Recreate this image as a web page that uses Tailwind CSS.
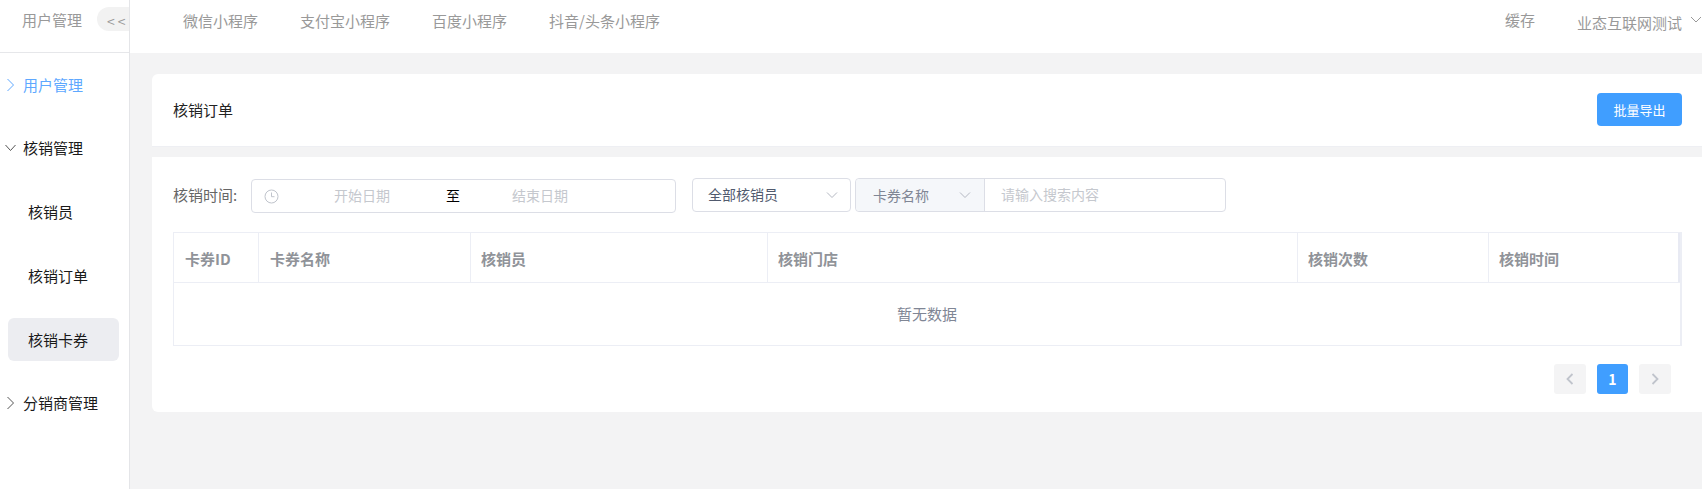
<!DOCTYPE html>
<html lang="zh-CN">
<head>
<meta charset="utf-8">
<script src="https://cdn.jsdelivr.net/npm/@tailwindcss/browser@4"></script>
</head>
<body class="bg-[#f3f3f4]">
<div class="flex h-[489px] w-[1702px] overflow-hidden bg-[#f3f3f4] font-['Noto_Sans_CJK_SC','Noto_Sans',sans-serif] text-[15px] leading-[20px]">
  <!-- sidebar -->
  <aside class="w-[130px] shrink-0 border-r border-[#e4e5e8] bg-white">
    <div class="flex h-[53px] items-start border-b border-[#e6e7ea] pl-[22px] pt-[7px]">
      <span class="w-[75px] shrink-0 pt-[3px] text-[#999]">用户管理</span>
      <span class="flex h-[24px] w-[32px] shrink-0 items-center rounded-l-[12px] bg-[#f2f2f2] pl-[10px] pt-[3px] text-[14px] tracking-[3px] text-[#999]">&lt;&lt;</span>
    </div>
    <nav class="flex flex-col pt-[10px] text-[#1a1a1a]">
      <div class="flex h-[43px] items-center pl-[4px] text-[#5ea8ff]">
        <svg class="mr-[6px] h-[14px] w-[13px]" viewBox="0 0 13 14" fill="none" stroke="currentColor" stroke-width="1"><path d="M3.5 1 L9.5 7 L3.5 13"/></svg>
        <span>用户管理</span>
      </div>
      <div class="mt-[20px] flex h-[43px] items-center pl-[4px]">
        <svg class="mr-[3px] h-[10px] w-[16px]" viewBox="0 0 16 10" fill="none" stroke="#555" stroke-width="1"><path d="M1.5 2 L6.5 7.5 L11.5 2"/></svg>
        <span>核销管理</span>
      </div>
      <div class="mt-[21px] flex h-[43px] items-center pl-[28px]">核销员</div>
      <div class="mt-[21px] flex h-[43px] items-center pl-[28px]">核销订单</div>
      <div class="mx-[8px] mt-[21px] flex h-[43px] w-[111px] items-center rounded-[6px] bg-[#ecedf1] pl-[20px]">核销卡券</div>
      <div class="mt-[20px] flex h-[43px] items-center pl-[4px]">
        <svg class="mr-[6px] h-[14px] w-[13px]" viewBox="0 0 13 14" fill="none" stroke="#555" stroke-width="1"><path d="M3.5 1 L9.5 7 L3.5 13"/></svg>
        <span>分销商管理</span>
      </div>
    </nav>
  </aside>
  <!-- main -->
  <div class="flex min-w-0 flex-1 flex-col">
    <header class="flex h-[53px] shrink-0 items-start bg-white pl-[53px] pt-[11px] text-[#999]">
      <span>微信小程序</span>
      <span class="ml-[42px]">支付宝小程序</span>
      <span class="ml-[42px]">百度小程序</span>
      <span class="ml-[42px]">抖音/头条小程序</span>
      <span class="ml-auto -mt-px">缓存</span>
      <span class="ml-[42px] mt-[2px]">业态互联网测试</span>
      <svg class="ml-[8px] mt-[4px] h-[9px] w-[12px]" viewBox="0 0 12 9" fill="none" stroke="#999" stroke-width="1"><path d="M1 2 L6 7 L11 2"/></svg>
    </header>
    <main class="flex flex-1 flex-col pl-[22px] pt-[21px]">
      <section class="flex h-[73px] items-center justify-between rounded-tl-[6px] border-b border-[#eeeff3] bg-white pl-[21px] pr-[20px] text-[#222]">
        <span>核销订单</span>
        <button class="mb-px h-[33px] w-[85px] rounded-[4px] bg-[#409eff] text-[13px] text-white">批量导出</button>
      </section>
      <section class="mt-[10px] h-[255px] rounded-bl-[6px] bg-white pl-[21px] pr-[20px] pt-[21px]">
        <div class="flex items-start">
          <span class="mt-[7px] w-[78px] text-[#666]">核销时间:</span>
          <div class="mt-px flex h-[34px] w-[425px] items-center rounded-[4px] border border-[#dcdee6] pl-[12px] text-[14px] text-[#c5c8ce]">
            <svg class="h-[15px] w-[15px]" viewBox="0 0 15 15" fill="none" stroke="#c0c4cc" stroke-width="1"><circle cx="7.5" cy="7.5" r="6.5"/><path d="M7.5 3.5 V7.7 H10.5"/></svg>
            <span class="mb-[2px] ml-[55px] w-[56px]">开始日期</span>
            <span class="mb-[2px] ml-[56px] w-[14px] text-black">至</span>
            <span class="mb-[2px] ml-[52px]">结束日期</span>
          </div>
          <div class="ml-[16px] flex h-[34px] w-[159px] items-center justify-between rounded-[4px] border border-[#dcdee6] pl-[15px] pr-[12px] text-[14px] text-[#515a6e]">
            <span class="mb-[2px]">全部核销员</span>
            <svg class="h-[8px] w-[12px]" viewBox="0 0 12 8" fill="none" stroke="#b4b8c2" stroke-width="1"><path d="M1 1.5 L6 6.5 L11 1.5"/></svg>
          </div>
          <div class="ml-[4px] flex h-[34px] w-[371px] items-center rounded-[4px] border border-[#dcdee6] text-[14px]">
            <div class="flex h-full w-[129px] items-center justify-between rounded-l-[4px] border-r border-[#dcdee6] bg-[#f5f7fa] pl-[17px] pr-[13px] text-[#808695]">
              <span>卡券名称</span>
              <svg class="h-[8px] w-[12px]" viewBox="0 0 12 8" fill="none" stroke="#b4b8c2" stroke-width="1"><path d="M1 1.5 L6 6.5 L11 1.5"/></svg>
            </div>
            <span class="mb-[2px] ml-[16px] text-[#c5c8ce]">请输入搜索内容</span>
          </div>
        </div>
        <div class="mt-[19px] h-[114px] border-t border-r-2 border-b border-l border-[#eceef5]">
          <div class="flex h-[50px] border-b border-[#eceef5] font-bold text-[#909399]">
            <div class="flex w-[85px] items-center border-r border-[#eceef5] pl-[11px] pt-[2px]">卡券ID</div>
            <div class="flex w-[212px] items-center border-r border-[#eceef5] pl-[11px] pt-[2px]">卡券名称</div>
            <div class="flex w-[297px] items-center border-r border-[#eceef5] pl-[10px] pt-[2px]">核销员</div>
            <div class="flex w-[530px] items-center border-r border-[#eceef5] pl-[10px] pt-[2px]">核销门店</div>
            <div class="flex w-[191px] items-center border-r border-[#eceef5] pl-[10px] pt-[2px]">核销次数</div>
            <div class="flex w-[191px] items-center border-r-[2px] border-[#e8eaf3] pl-[10px] pt-[2px]">核销时间</div>
          </div>
          <div class="flex h-[62px] items-center justify-center text-[#808695]">暂无数据</div>
        </div>
        <div class="mt-[18px] flex justify-end gap-[11px] pr-[11px]">
          <span class="flex h-[30px] w-[32px] items-center justify-center rounded-[3px] bg-[#f4f4f5]">
            <svg class="h-[12px] w-[8px]" viewBox="0 0 8 12" fill="none" stroke="#c0c4cc" stroke-width="1.8"><path d="M6.5 1 L1.5 6 L6.5 11"/></svg>
          </span>
          <span class="flex h-[30px] w-[31px] items-center justify-center rounded-[3px] bg-[#409eff] text-[14px] font-bold text-white">1</span>
          <span class="flex h-[30px] w-[32px] items-center justify-center rounded-[3px] bg-[#f4f4f5]">
            <svg class="h-[12px] w-[8px]" viewBox="0 0 8 12" fill="none" stroke="#c0c4cc" stroke-width="1.8"><path d="M1.5 1 L6.5 6 L1.5 11"/></svg>
          </span>
        </div>
      </section>
    </main>
  </div>
</div>
</body>
</html>
